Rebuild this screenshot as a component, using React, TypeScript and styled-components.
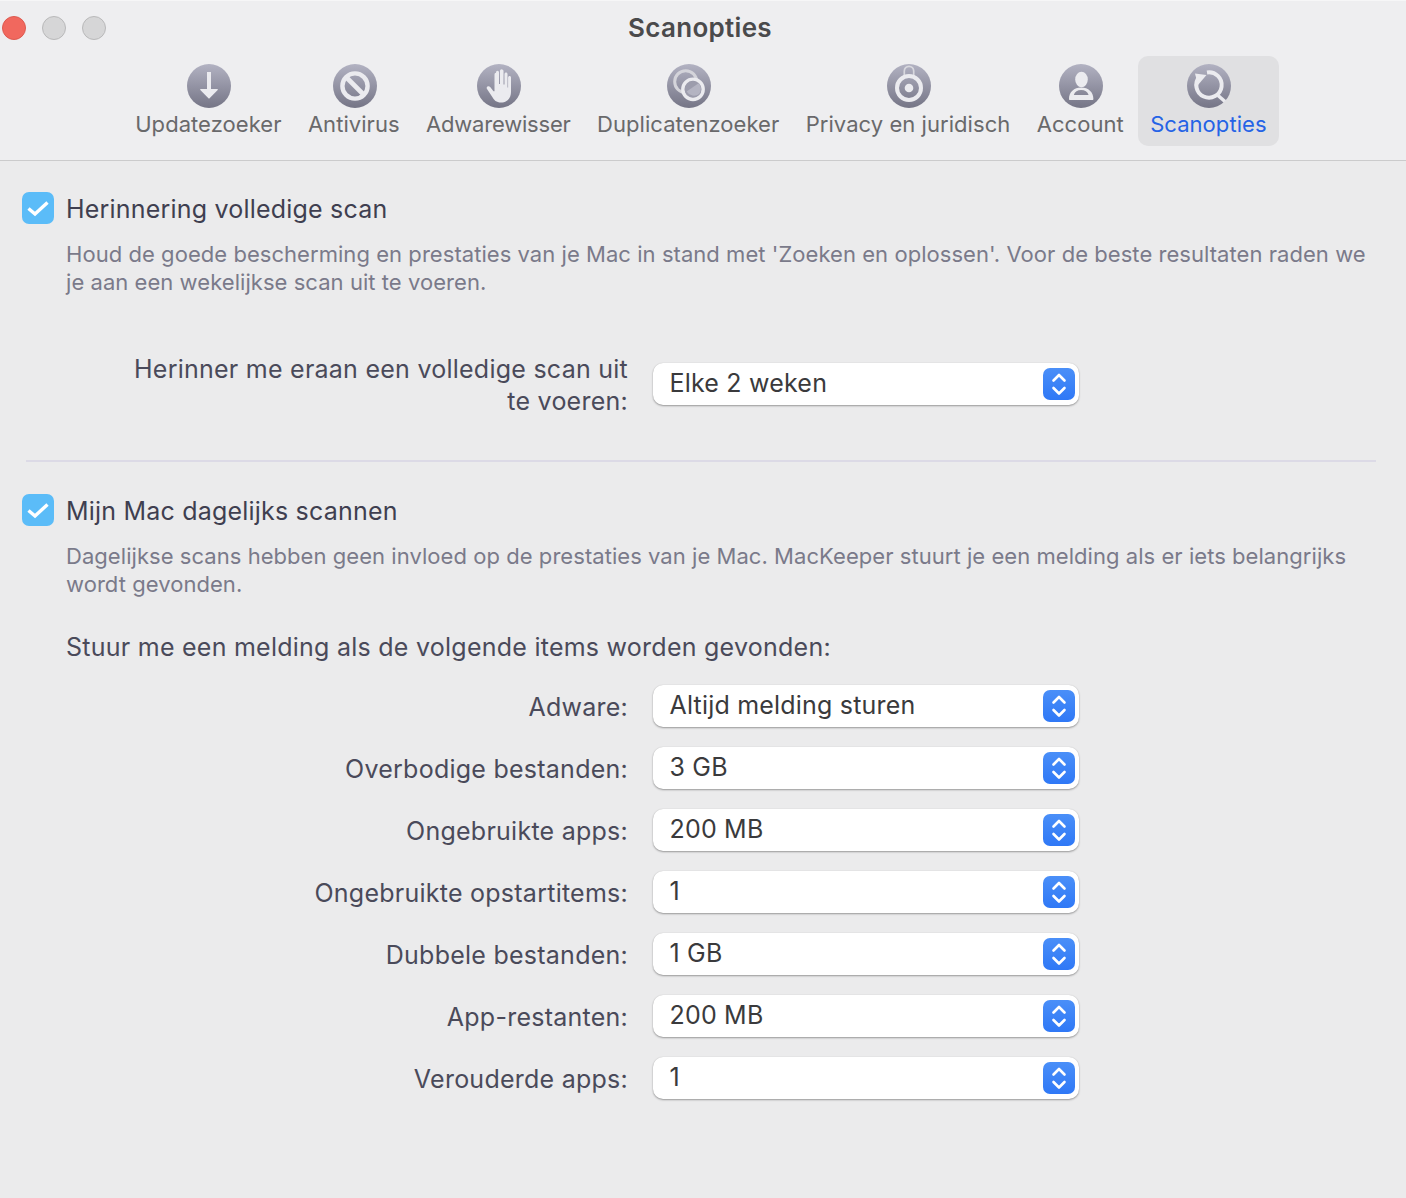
import React from 'react';
import styled, { createGlobalStyle } from 'styled-components';

const GlobalStyle = createGlobalStyle`
  html, body {
    margin: 0;
    padding: 0;
    background: #ebebec;
    font-family: Inter, "Noto Sans", "Liberation Sans", sans-serif;
  }
  * { box-sizing: border-box; }
`;

const Window = styled.div`
  width: 1406px;
  height: 1198px;
  overflow: hidden;
  background: #ebebec;
`;

const Toolbar = styled.header`
  height: 161px;
  padding-top: 14px;
  background: #eeeef0;
  border-top: 1px solid #f6f6f7;
  border-bottom: 1px solid #cbcbcc;
`;

const TitleRow = styled.div`
  position: relative;
  height: 26px;
  display: flex;
  justify-content: center;
  align-items: center;
  padding-right: 6px;
`;

const Title = styled.h1`
  position: relative;
  top: -1px;
  margin: 0;
  font-size: 26px;
  font-weight: 600;
  letter-spacing: 0.3px;
  color: #4a4a4c;
`;

const Lights = styled.div`
  position: absolute;
  left: 2px;
  top: 1px;
  display: flex;
  gap: 16px;
`;

const Light = styled.span<{ $red?: boolean }>`
  width: 24px;
  height: 24px;
  border-radius: 50%;
  background: ${({ $red }) => ($red ? '#f1685e' : '#d6d6d7')};
  border: 1px solid ${({ $red }) => ($red ? '#dd5a50' : '#b9b9ba')};
`;

const Tabs = styled.nav`
  display: flex;
  gap: 2.4px;
  margin-top: 15px;
  padding-left: 123.2px;
`;

const Tab = styled.div<{ $active?: boolean }>`
  height: 90px;
  padding: 8px 12px 0;
  border-radius: 10px;
  display: flex;
  flex-direction: column;
  align-items: center;
  background: ${({ $active }) => ($active ? '#e0e0e2' : 'transparent')};
  color: ${({ $active }) => ($active ? '#2563e6' : '#69696b')};
`;

const TabIcon = styled.svg`
  display: block;
  width: 44px;
  height: 44px;
  margin-left: 2px;
  flex: none;
`;

const TabLabel = styled.span<{ $tight?: boolean }>`
  margin-top: 3px;
  font-size: 22px;
  line-height: 26px;
  letter-spacing: ${({ $tight }) => ($tight ? '-0.2px' : '0.05px')};
  white-space: nowrap;
`;

const Content = styled.main`
  padding: 31px 30px 0 22px;
`;

const CheckRow = styled.div`
  display: flex;
  align-items: center;
  gap: 12px;
  height: 32px;
`;

const CheckBox = styled.span`
  width: 32px;
  height: 32px;
  border-radius: 7px;
  background: #5bbcf8;
  display: flex;
  align-items: center;
  justify-content: center;
  flex: none;
`;

const CheckLabel = styled.span`
  padding-top: 2px;
  font-size: 25px;
  letter-spacing: 0.2px;
  color: #3f3f50;
`;

const Description = styled.p`
  margin: 16px 0 0 44px;
  font-size: 22px;
  line-height: 28px;
  letter-spacing: 0.05px;
  color: #7a7a8a;
`;

const Row = styled.div<{ $top: number }>`
  display: grid;
  grid-template-columns: 606px 426px;
  column-gap: 25px;
  align-items: center;
  margin-top: ${({ $top }) => $top}px;
`;

const RowLabel = styled.div`
  justify-self: end;
  max-width: 500px;
  padding-top: 2px;
  font-size: 25px;
  line-height: 32px;
  letter-spacing: 0.25px;
  text-align: right;
  color: #4a4a5a;
`;

const SelectBox = styled.div`
  height: 42px;
  border-radius: 10px;
  background: #ffffff;
  box-shadow: 0 1px 2px rgba(0, 0, 0, 0.35), 0 0 1px rgba(0, 0, 0, 0.15);
  display: flex;
  align-items: center;
  justify-content: space-between;
  padding: 0 4px 0 16.5px;
  font-size: 25px;
  letter-spacing: 0.2px;
  color: #3a3a3c;
`;

const SelectValue = styled.span`
  position: relative;
  top: -1px;
`;

const Stepper = styled.span`
  width: 32px;
  height: 32px;
  border-radius: 7px;
  background: linear-gradient(#4a8ff8, #2f78f6);
  display: flex;
`;

const Divider = styled.hr`
  margin: 43px 0 32px 4px;
  border: 0;
  height: 2px;
  background: #dcdae6;
`;

const Subheading = styled.div`
  margin: 33px 0 0 44px;
  font-size: 25px;
  line-height: 32px;
  letter-spacing: 0.25px;
  color: #4a4a5a;
`;

const Glyph: React.FC<{ id: string; children: React.ReactNode }> = ({ id, children }) => (
  <TabIcon viewBox="0 0 44 44">
    <defs>
      <linearGradient id={id} x1="0" y1="0" x2="0" y2="1">
        <stop offset="0" stopColor="#b2b2c2" />
        <stop offset="1" stopColor="#757586" />
      </linearGradient>
    </defs>
    <circle cx="22" cy="22" r="22" fill={`url(#${id})`} />
    {children}
  </TabIcon>
);

const W = '#ebebef';

const tabs = [
  {
    label: 'Updatezoeker',
    icon: (
      <path
        d="M20 8h4v17h6.200a.6.6 0 0 1 .5 1L22.800 34a1 1 0 0 1-1.600 0L13.300 26a.6.6 0 0 1 .5-1H20z"
        fill={W}
      />
    ),
  },
  {
    label: 'Antivirus',
    icon: (
      <g fill="none" stroke={W}>
        <circle cx="22" cy="22" r="12.600" strokeWidth="4.400" />
        <path d="M14 14l16 16" strokeWidth="4.600" />
      </g>
    ),
  },
  {
    label: 'Adwarewisser',
    tight: true,
    icon: (
      <path
        d="M19 8.500c0-1 .7-1.700 1.500-1.700s1.500.7 1.500 1.700V20h1V7c0-1 .7-1.700 1.500-1.700S26.500 6 26.500 7v13.500h1V10c0-1 .7-1.600 1.500-1.600s1.500.6 1.500 1.600v13.500h.6V13.500c0-1 .7-1.600 1.500-1.600s1.400.6 1.400 1.600V28c0 6.300-4 10.600-10 10.600-4.600 0-7-2.300-9-6l-5-7.600c-.6-1-.3-2 .5-2.500.9-.6 2-.3 2.700.6l3.300 4.200h1V10.500c0-1 .7-1.700 1.500-1.700s1.500.7 1.500 1.700z"
        fill={W}
      />
    ),
  },
  {
    label: 'Duplicatenzoeker',
    icon: (
      <g fill="none">
        <circle cx="18.700" cy="17.700" r="11" stroke="#d4d4da" strokeWidth="3" />
        <circle cx="26" cy="25.300" r="8.500" fill="#9c9cac" />
        <path d="M19.600 27.500l12-8.300a8.500 8.500 0 0 1 .8 10.500 8.500 8.500 0 0 1-12.800-2.200z" fill="#b4b4c2" />
        <circle cx="26" cy="25.300" r="10.200" stroke={W} strokeWidth="3.400" />
      </g>
    ),
  },
  {
    label: 'Privacy en juridisch',
    icon: (
      <g fill="none" stroke={W}>
        <path d="M17.300 12.500V7a4.700 4.700 0 0 1 9.400 0v5.500" strokeWidth="1.700" stroke="#d8d8de" />
        <circle cx="22" cy="24" r="12" strokeWidth="4" />
        <circle cx="22" cy="24" r="4.300" fill={W} stroke="none" />
      </g>
    ),
  },
  {
    label: 'Account',
    icon: (
      <g fill={W}>
        <ellipse cx="22.500" cy="15.500" rx="6.300" ry="7.800" />
        <path
          fillRule="evenodd"
          d="M10 35c0-7 5-11.500 12.200-11.500S34.400 28 34.400 35c0 .7-.4 1.100-1 1.100H11c-.6 0-1-.4-1-1.100zm4.800-4h14.800c-1-3-3.800-4.900-7.400-4.900s-6.400 1.900-7.400 4.900z"
        />
      </g>
    ),
  },
  {
    label: 'Scanopties',
    active: true,
    icon: (
      <g fill="none" stroke={W}>
        <path d="M12.500 12.500A12.700 12.700 0 1 0 20 8.400" strokeWidth="4" />
        <path d="M31 31.500l7 6" strokeWidth="3.600" />
        <path d="M8 9.500l11.500 1.500L11 21z" fill={W} stroke="none" />
      </g>
    ),
  },
];

const Check = () => (
  <svg width="32" height="32" viewBox="0 0 32 32" fill="none">
    <path d="M6.500 16.500l6.500 5.500L25.500 10.500" stroke="#fff" strokeWidth="3.400" />
  </svg>
);

const Chevrons = () => (
  <svg width="32" height="32" viewBox="0 0 32 32" fill="none">
    <path
      d="M10.500 12.500L16 7l5.500 5.500M10.500 20l5.500 5.500 5.500-5.500"
      stroke="#fff"
      strokeWidth="2.600"
      strokeLinecap="round"
      strokeLinejoin="round"
    />
  </svg>
);

const Select: React.FC<{ value: string }> = ({ value }) => (
  <SelectBox>
    <SelectValue>{value}</SelectValue>
    <Stepper>
      <Chevrons />
    </Stepper>
  </SelectBox>
);

const notifications = [
  ['Adware:', 'Altijd melding sturen'],
  ['Overbodige bestanden:', '3 GB'],
  ['Ongebruikte apps:', '200 MB'],
  ['Ongebruikte opstartitems:', '1'],
  ['Dubbele bestanden:', '1 GB'],
  ['App-restanten:', '200 MB'],
  ['Verouderde apps:', '1'],
];

const App: React.FC = () => {
  return (
    <Window>
      <GlobalStyle />
      <Toolbar>
        <TitleRow>
          <Lights>
            <Light $red />
            <Light />
            <Light />
          </Lights>
          <Title>Scanopties</Title>
        </TitleRow>
        <Tabs>
          {tabs.map((tab, i) => (
            <Tab key={tab.label} $active={tab.active}>
              <Glyph id={`tab-gradient-${i}`}>{tab.icon}</Glyph>
              <TabLabel $tight={tab.tight}>{tab.label}</TabLabel>
            </Tab>
          ))}
        </Tabs>
      </Toolbar>
      <Content>
        <CheckRow>
          <CheckBox>
            <Check />
          </CheckBox>
          <CheckLabel>Herinnering volledige scan</CheckLabel>
        </CheckRow>
        <Description>
          Houd de goede bescherming en prestaties van je Mac in stand met 'Zoeken en oplossen'. Voor de beste
          resultaten raden we je aan een wekelijkse scan uit te voeren.
        </Description>
        <Row $top={55}>
          <RowLabel>Herinner me eraan een volledige scan uit te voeren:</RowLabel>
          <Select value="Elke 2 weken" />
        </Row>
        <Divider />
        <CheckRow>
          <CheckBox>
            <Check />
          </CheckBox>
          <CheckLabel>Mijn Mac dagelijks scannen</CheckLabel>
        </CheckRow>
        <Description>
          Dagelijkse scans hebben geen invloed op de prestaties van je Mac. MacKeeper stuurt je een melding als er
          iets belangrijks wordt gevonden.
        </Description>
        <Subheading>Stuur me een melding als de volgende items worden gevonden:</Subheading>
        {notifications.map(([label, value], i) => (
          <Row key={label} $top={i === 0 ? 22 : 20}>
            <RowLabel>{label}</RowLabel>
            <Select value={value} />
          </Row>
        ))}
      </Content>
    </Window>
  );
};

export default App;
